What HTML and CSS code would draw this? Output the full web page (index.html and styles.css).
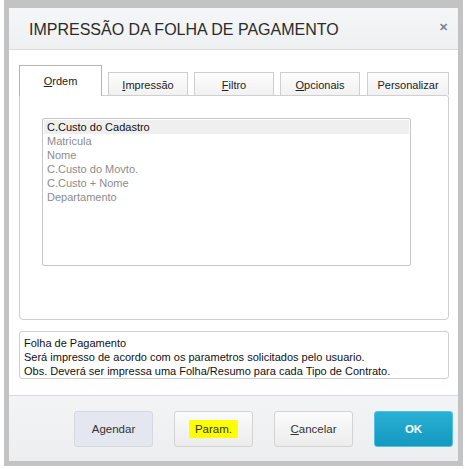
FILE: index.html
```html
<!DOCTYPE html>
<html>
<head>
	<title>Impressão da Folha de Pagamento</title>
	<link rel="stylesheet" href="styles.css">
</head>
<body>
	<div class="frame">
		<div class="dialog">
			<div class="dialog-header">
				<h1 class="dialog-title">IMPRESSÃO DA FOLHA DE PAGAMENTO</h1>
				<span class="dialog-close">&#x2715;</span>
			</div>

			<div class="dialog-body">
				<div class="tabs">
					<div class="tab tab-active"><u>O</u>rdem</div>
					<div class="tab"><u>I</u>mpressão</div>
					<div class="tab"><u>F</u>iltro</div>
					<div class="tab"><u>O</u>pcionais</div>
					<div class="tab">Personalizar</div>
				</div>

				<div class="tab-panel">
					<ul class="order-list">
						<li class="selected">C.Custo do Cadastro</li>
						<li>Matricula</li>
						<li>Nome</li>
						<li>C.Custo do Movto.</li>
						<li>C.Custo + Nome</li>
						<li>Departamento</li>
					</ul>
				</div>

				<div class="description">
					Folha de Pagamento<br>
					Será impresso de acordo com os parametros solicitados pelo usuario.<br>
					Obs. Deverá ser impressa uma Folha/Resumo para cada Tipo de Contrato.
				</div>
			</div>

			<div class="dialog-footer">
				<button class="btn btn-schedule">Agendar</button>
				<button class="btn"><span class="highlight">Param.</span></button>
				<button class="btn"><u>C</u>ancelar</button>
				<button class="btn btn-ok">OK</button>
			</div>
		</div>
	</div>
</body>
</html>
```

FILE: styles.css
```css
body {
	margin: 0;
	background-color: #fff;
	font-family: "Liberation Sans", Arial, sans-serif;
}
.frame {
	margin-left: 4px;
	width: 459px;
	height: 466px;
	box-sizing: border-box;
	padding: 8px 5px 5px 5px;
	background-color: #c3c3c3;
}
.dialog {
	width: 449px;
	height: 453px;
	background-color: #fff;
	display: flex;
	flex-direction: column;
}
.dialog-header {
	height: 41px;
	border-bottom: 1px solid #dadcde;
	background: linear-gradient(#f5f6f7, #eef0f1);
	display: flex;
	align-items: center;
	justify-content: space-between;
	padding: 0 10px 0 20px;
}
.dialog-title {
	margin: 0;
	font-size: 16px;
	font-weight: normal;
	color: #2b2b2b;
	padding-top: 2px;
}
.dialog-close {
	font-size: 11px;
	font-weight: bold;
	color: #7b8290;
	margin-top: -2px;
}
.dialog-body {
	flex: 1;
	padding: 15px 9px 0 10px;
}
.tabs {
	display: flex;
	align-items: flex-end;
	gap: 6px;
	height: 30px;
	position: relative;
	z-index: 1;
}
.tab {
	width: 80px;
	height: 23px;
	box-sizing: border-box;
	border: 1px solid #cfcfcf;
	border-bottom: none;
	background: linear-gradient(#fdfdfd, #f1f1f1);
	font-size: 11px;
	color: #222;
	text-align: center;
	line-height: 24px;
}
.tab-active {
	width: 83px;
	height: 31px;
	margin-bottom: -1px;
	border-color: #b5b5b5;
	background: #fff;
	line-height: 30px;
}
.tab:last-child {
	margin-left: 1px;
	width: 82px;
}
.tab-panel {
	height: 225px;
	box-sizing: border-box;
	border: 1px solid #cfcfcf;
	border-radius: 0 3px 4px 4px;
	padding: 22px 0 0 22px;
}
.order-list {
	list-style: none;
	margin: 0;
	padding: 1px;
	width: 369px;
	height: 148px;
	box-sizing: border-box;
	border: 1px solid #c6c6c6;
	border-radius: 2px;
	font-size: 11px;
}
.order-list li {
	height: 14px;
	line-height: 14px;
	padding-left: 3px;
	color: #8c8c8c;
}
.order-list li.selected {
	background-color: #efefef;
	color: #111;
}
.description {
	margin-top: 11px;
	height: 48px;
	box-sizing: border-box;
	border: 1px solid #d0d0d0;
	border-radius: 3px;
	padding: 4px 4px;
	font-size: 11px;
	line-height: 14px;
	color: #111;
}
.dialog-footer {
	height: 66px;
	box-sizing: border-box;
	border-top: 1px solid #d8dadc;
	background: linear-gradient(#f3f4f5, #eceeef);
	display: flex;
	justify-content: flex-end;
	gap: 21px;
	padding: 15px 5px 0 0;
}
.btn {
	width: 79px;
	height: 36px;
	border: 1px solid #d3d3d3;
	border-radius: 3px;
	background: linear-gradient(#fbfbfb, #ececec);
	font-family: "Liberation Sans", Arial, sans-serif;
	font-size: 11.5px;
	color: #333;
	padding: 0;
	cursor: pointer;
}
.btn-schedule {
	background: #e4e7ef;
	border-color: #d4d8e0;
}
.btn-ok {
	background: linear-gradient(#2ab0d4, #1399c0);
	border-color: #4fc3e6;
	color: #fff;
	font-weight: bold;
}
.highlight {
	background-color: #ffff00;
	padding: 3px 6px;
}
```
